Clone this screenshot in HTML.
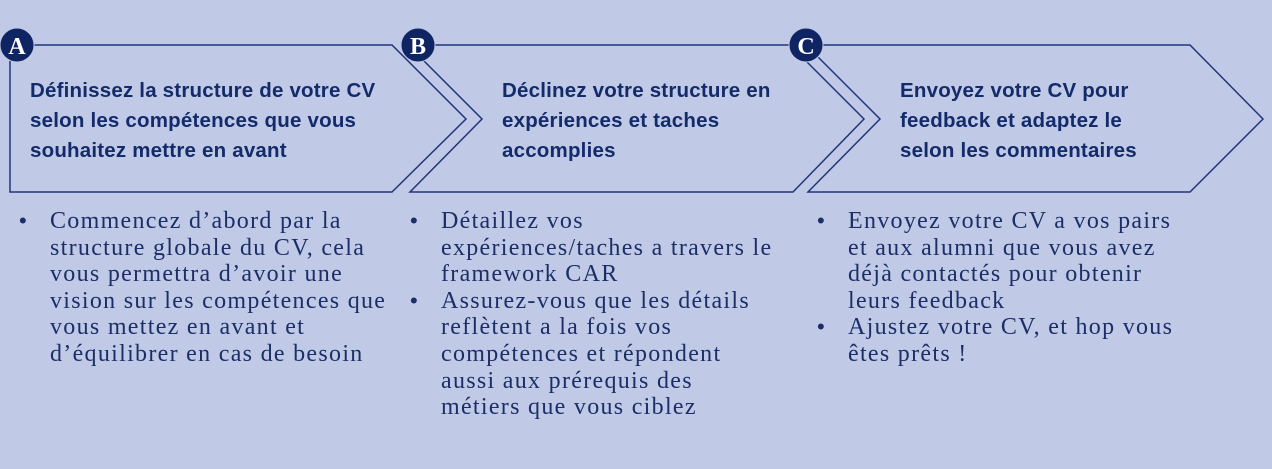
<!DOCTYPE html>
<html><head><meta charset="utf-8"><style>
body{margin:0;width:1272px;height:469px;background:#c0cae6;overflow:hidden;position:relative;font-family:"Liberation Sans",sans-serif}
.h{position:absolute;font-weight:bold;font-size:20.5px;color:#132a6b;line-height:30px;white-space:nowrap;letter-spacing:0.2px}
.b{position:absolute;font-family:"Liberation Serif",serif;font-size:24px;color:#1c2e67;line-height:26.6px;white-space:nowrap;letter-spacing:1.3px}
.b div{position:relative}
.dot{position:absolute;left:-31px;font-family:"Liberation Sans",sans-serif;font-size:22px;letter-spacing:0}
</style></head><body>
<svg width="1272" height="469" style="position:absolute;left:0;top:0">
<g fill="none" stroke="#22357a" stroke-width="1.5">
<polyline points="10,45 392,45 466,119 392,192 10,192 10,45"/>
<polyline points="408,45 790,45 864,119 793,192 410,192 482,119 408,45"/>
<polyline points="806,45 1190,45 1263,119 1190,192 808,192 880,119 806,45"/>
</g>
<g fill="#0e2463" stroke="#c0cae6" stroke-width="1">
<circle cx="17" cy="45" r="17"/><circle cx="418" cy="45" r="17"/><circle cx="806" cy="45" r="17"/>
</g>
<g fill="#fff" font-family="Liberation Serif,serif" font-weight="bold" font-size="24" text-anchor="middle">
<text x="17" y="54">A</text><text x="418" y="54">B</text><text x="806" y="54">C</text>
</g>
</svg>
<div class="h" style="left:30px;top:76px">Définissez la structure de votre CV<br>selon les compétences que vous<br>souhaitez mettre en avant</div>
<div class="h" style="left:502px;top:76px">Déclinez votre structure en<br>expériences et taches<br>accomplies</div>
<div class="h" style="left:900px;top:76px">Envoyez votre CV pour<br>feedback et adaptez le<br>selon les commentaires</div>
<div class="b" style="left:50px;top:208px">
<div><span class="dot">•</span>Commencez d’abord par la</div><div>structure globale du CV, cela</div><div>vous permettra d’avoir une</div><div>vision sur les compétences que</div><div>vous mettez en avant et</div><div>d’équilibrer en cas de besoin</div></div>
<div class="b" style="left:441px;top:208px">
<div><span class="dot">•</span>Détaillez vos</div><div>expériences/taches a travers le</div><div>framework CAR</div><div><span class="dot">•</span>Assurez-vous que les détails</div><div>reflètent a la fois vos</div><div>compétences et répondent</div><div>aussi aux prérequis des</div><div>métiers que vous ciblez</div></div>
<div class="b" style="left:848px;top:208px">
<div><span class="dot">•</span>Envoyez votre CV a vos pairs</div><div>et aux alumni que vous avez</div><div>déjà contactés pour obtenir</div><div>leurs feedback</div><div><span class="dot">•</span>Ajustez votre CV, et hop vous</div><div>êtes prêts !</div></div>
</body></html>
